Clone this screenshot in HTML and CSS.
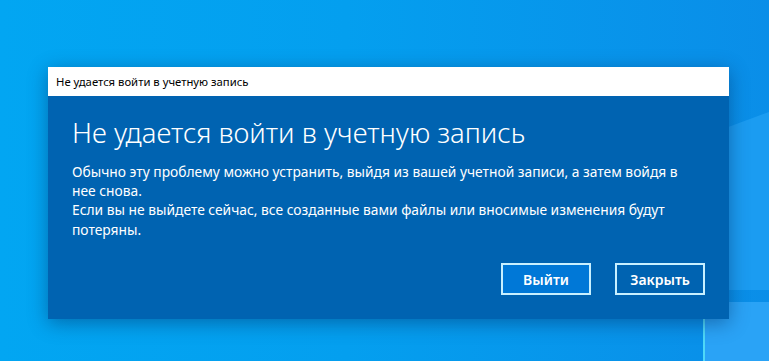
FILE: index.html
```html
<!DOCTYPE html>
<html lang="ru">
<head>
  <meta charset="UTF-8">
  <meta name="viewport" content="width=device-width, initial-scale=1.0">
  <title>Не удается войти в учетную запись</title>
  <link rel="stylesheet" href="styles.css">
</head>
<body>
  <!-- обои рабочего стола -->
  <svg class="wallpaper" width="769" height="361" viewBox="0 0 769 361">
    <polygon points="704,136 769,112 769,290 704,290" fill="#1b9cf1"/>
    <polygon points="704,302 769,302 769,361 704,361" fill="#2aa3f6"/>
    <rect x="703" y="302" width="2" height="59" fill="#4fd8f8"/>
  </svg>

  <div class="dialog">
    <div class="dialog-title">Не удается войти в учетную запись</div>

    <div class="dialog-body">
      <h1 class="heading">Не удается войти в учетную запись</h1>
      <p class="message">
        Обычно эту проблему можно устранить, выйдя из вашей учетной записи, а затем войдя в<br>
        нее снова.<br>
        Если вы не выйдете сейчас, все созданные вами файлы или вносимые изменения будут<br>
        потеряны.
      </p>

      <div class="buttons">
        <button class="btn btn-primary">Выйти</button>
        <button class="btn">Закрыть</button>
      </div>
    </div>
  </div>
</body>
</html>
```

FILE: styles.css
```css
* {
  padding: 0;
  margin: 0;
  box-sizing: border-box;
}

body {
  position: relative;
  width: 769px;
  height: 361px;
  overflow: hidden;
  padding: 67px 0 0 48px;
  font-family: "Noto Sans", "Open Sans", sans-serif;
  background: linear-gradient(90deg, #02a6f2 0%, #049fef 45%, #0a8ee8 100%);
}

.wallpaper {
  position: absolute;
  left: 0;
  top: 0;
}

.dialog {
  position: relative;
  display: flex;
  flex-direction: column;
  width: 681px;
  height: 252px;
  box-shadow: 0 4px 18px rgba(0, 40, 90, 0.45);
}

.dialog-title {
  height: 29px;
  padding-left: 8px;
  font-size: 11.3px;
  line-height: 29px;
  color: #000;
  background-color: #fff;
}

.dialog-body {
  display: flex;
  flex-direction: column;
  flex: 1;
  padding: 21px 24px 24px;
  color: #fff;
  background-color: #0063b1;
}

.heading {
  font-size: 27.5px;
  font-weight: 300;
  line-height: 32px;
  white-space: nowrap;
}

.message {
  margin-top: 13px;
  font-size: 13.8px;
  line-height: 19.2px;
  white-space: nowrap;
}

.buttons {
  display: flex;
  justify-content: flex-end;
  gap: 24px;
  margin-top: auto;
}

.btn {
  width: 90px;
  height: 32px;
  font-family: inherit;
  font-size: 14px;
  font-weight: 600;
  color: #fff;
  background-color: #0063b1;
  border: 2px solid #c8f0ff;
  cursor: pointer;
}

.btn-primary {
  background-color: #0078d7;
}
```
